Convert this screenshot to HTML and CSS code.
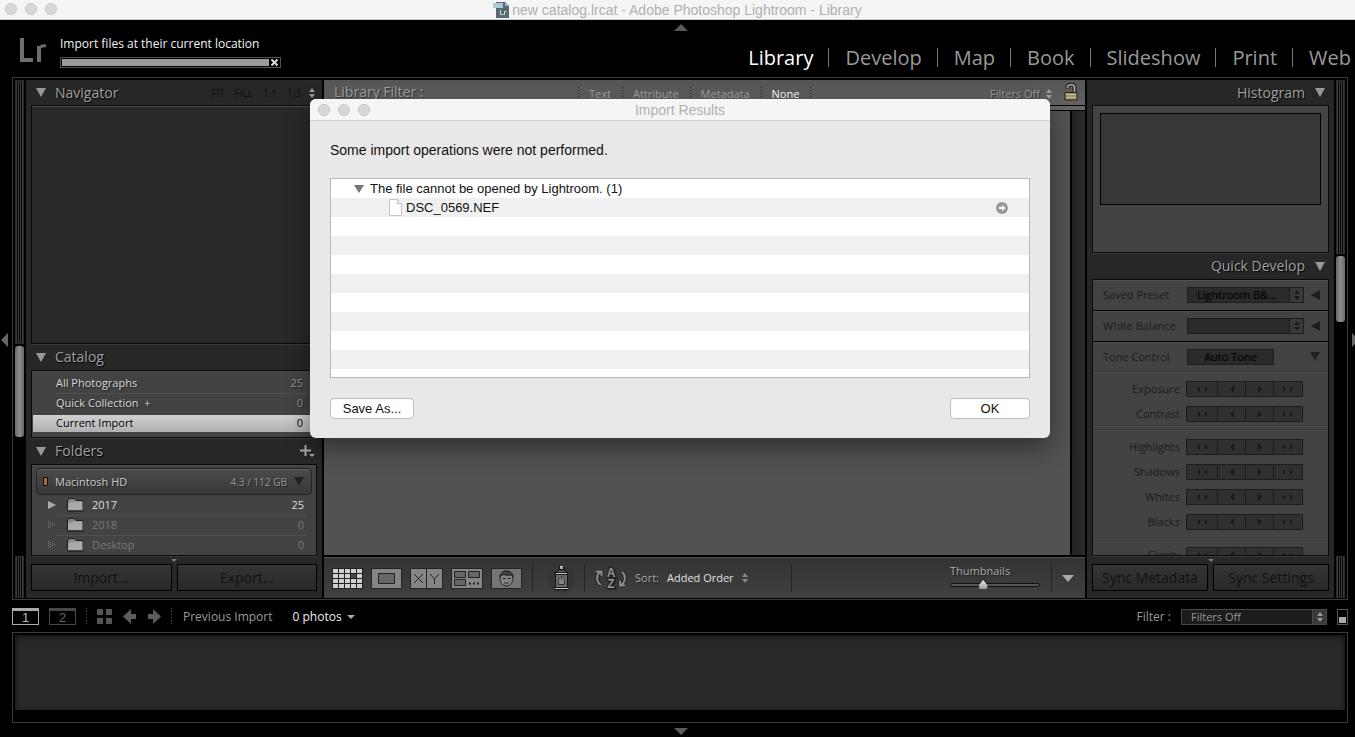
FILE: index.html
```html
<!DOCTYPE html>
<html lang="en">
<head>
<meta charset="utf-8">
<title>new catalog.lrcat - Adobe Photoshop Lightroom - Library</title>
<link rel="stylesheet" href="styles.css">
</head>
<body>
<svg class="defs" aria-hidden="true">
  <symbol id="ll" viewBox="0 0 12 8"><path d="M4 1v6L1 4zM11 1v6L8 4z"/></symbol>
  <symbol id="l" viewBox="0 0 12 8"><path d="M8 0v8L4 4z"/></symbol>
  <symbol id="r" viewBox="0 0 12 8"><path d="M4 0v8l4-4z"/></symbol>
  <symbol id="rr" viewBox="0 0 12 8"><path d="M1 1v6l3-3zM8 1v6l3-3z"/></symbol>
  <symbol id="updown" viewBox="0 0 6 10"><path d="M0 4l3-4 3 4zM0 6h6l-3 4z"/></symbol>
  <symbol id="folder" viewBox="0 0 17 14"><path d="M.5 12.500V3L2 .5h5l2 2h6.500v10z" fill="#8a8a8a" stroke="#1c1c1c"/><path d="M1 5l4-.5L7 3.500h8.500V12.500H1z" fill="#a9a9a9"/><path d="M1 13h15.500" stroke="#181818"/></symbol>
</svg>

<header class="titlebar">
  <span class="lights"><i></i><i></i><i></i></span>
  <svg width="16" height="17" viewBox="0 0 16 17"><path d="M3 1h9l4 4v12H3z" fill="#5b6870"/><path d="M12 1l4 4h-4z" fill="#8fb5c7"/><path d="M0 2h10v5H0z" fill="#a9cbdc"/><path d="M7.500 9v4.500h3M11.500 14v-3.500h2" fill="none" stroke="#b9dff0"/></svg>
  <span>new catalog.lrcat - Adobe Photoshop Lightroom - Library</span>
</header>

<div class="top">
  <svg class="logo" width="28" height="26" viewBox="0 0 28 26"><path d="M3 0v22h11M20 24V8" fill="none" stroke="#6e6e6e" stroke-width="4"/><path d="M20 13c0-4 3-6 7-5" fill="none" stroke="#6e6e6e" stroke-width="3"/></svg>
  <div class="activity">
    <span>Import files at their current location</span>
    <div class="progress"><div class="fill"></div><button aria-label="Cancel import"><svg width="7" height="7" viewBox="0 0 7 7"><path d="M.5.5l6 6M6.500.5l-6 6" stroke="#ddd" stroke-width="2"/></svg></button></div>
  </div>
  <nav class="modules"><a class="on" href="#">Library</a><a href="#">Develop</a><a href="#">Map</a><a href="#">Book</a><a href="#">Slideshow</a><a href="#">Print</a><a href="#">Web</a></nav>
  <i class="edge up"></i>
</div>

<main class="frame">
  <div class="strip"><i class="grip grow"></i><i class="thumb left-thumb"></i><i class="blank"></i><i class="grip foot-grip"></i></div>

  <aside class="panel left">
    <h2><i class="tri"></i>Navigator<span class="zooms"><b>FIT</b><b>FILL</b><b>1:1</b><b>1:3</b><svg width="6" height="10"><use href="#updown"/></svg></span></h2>
    <div class="box navigator"></div>
    <h2><i class="tri"></i>Catalog</h2>
    <ul class="box catalog">
      <li><span>All Photographs</span><em>25</em></li>
      <li><span>Quick Collection&nbsp; +</span><em>0</em></li>
      <li class="selected"><span>Current Import</span><em>0</em></li>
    </ul>
    <h2><i class="tri"></i>Folders<button class="add" aria-label="Add folder"><svg width="15" height="13" viewBox="0 0 15 13"><path d="M5.500 0v11M0 5.500h11" stroke="#aaa" stroke-width="2"/><path d="M9 9h6l-3 3z" fill="#aaa"/></svg></button></h2>
    <div class="box folders">
      <div class="volume"><i class="led"></i><span>Macintosh HD</span><small>4.3 / 112 GB</small><i class="tri dark"></i></div>
      <ul>
        <li class="live"><i class="right"></i><svg width="17" height="14"><use href="#folder"/></svg><span>2017</span><em>25</em></li>
        <li><svg class="dots" width="8" height="8" viewBox="0 0 8 8"><path d="M.5 0v8M2.500 1v6M4.500 2v4M6.500 3v2" stroke="#777" stroke-dasharray="1 1"/></svg><svg width="17" height="14"><use href="#folder"/></svg><span>2018</span><em>0</em></li>
        <li><svg class="dots" width="8" height="8" viewBox="0 0 8 8"><path d="M.5 0v8M2.500 1v6M4.500 2v4M6.500 3v2" stroke="#777" stroke-dasharray="1 1"/></svg><svg width="17" height="14"><use href="#folder"/></svg><span>Desktop</span><em>0</em></li>
      </ul>
    </div>
    <div class="more"><i></i></div>
    <div class="actions"><button>Import...</button><button>Export...</button></div>
  </aside>

  <section class="center">
    <div class="filterbar">
      <strong>Library Filter :</strong>
      <div class="tabs"><button>Text</button><button>Attribute</button><button>Metadata</button><button class="on">None</button><i></i></div>
      <span class="off">Filters Off<svg width="6" height="10"><use href="#updown"/></svg></span>
      <svg class="lock" width="14" height="18" viewBox="0 0 14 18"><path d="M3.500 6V4c0-3.500 7-3.500 7 0v5" fill="none" stroke="#222" stroke-width="4"/><path d="M3.500 5.500V4c0-3 7-3 7 0v5" fill="none" stroke="#b0b0b0" stroke-width="1.600"/><path d="M1 9.500h12v7.500H1z" fill="#9a9068" stroke="#252525"/><path d="M2 11.500h10M2 14.500h10" stroke="#c8bd95"/></svg>
    </div>
    <div class="canvas"><div class="photos"></div><div class="track"></div></div>
    <div class="toolbar">
      <div class="views">
        <button aria-label="Grid view"><svg width="31" height="21" viewBox="0 0 31 21"><path fill="#222" d="M0 0h31v21H0z"/><path d="M1 3h30M1 8h30M1 13h30M1 18h30" stroke="#d0d0d0" stroke-width="4" stroke-dasharray="5 1"/><path fill="#444" d="M19 6h5v4h-5z"/></svg></button>
        <button aria-label="Loupe view"><svg width="31" height="21" viewBox="0 0 31 21"><path d="M.5.5h30v20H.5z" fill="#858585" stroke="#222"/><path d="M7.500 5.500h16v10h-16z" fill="#666" stroke="#222"/></svg></button>
        <button aria-label="Compare view"><svg width="33" height="21" viewBox="0 0 33 21"><path d="M.5.5h32v20H.5zM16.500 0v21" fill="#858585" stroke="#222"/><path d="M4 6l9 9M13 6l-9 9M20 6l4.500 5L29 6M24.500 11v5" fill="none" stroke="#222"/></svg></button>
        <button aria-label="Survey view"><svg width="32" height="21" viewBox="0 0 32 21"><path d="M.5.5h31v20H.5z" fill="#858585" stroke="#222"/><path d="M3.500 3.500h11v6h-11zM17.500 3.500h11v6h-11zM3.500 11.500h11v6h-11z" fill="#666" stroke="#222"/><path d="M18 15.500h2M22 15.500h2M26 15.500h2" stroke="#222" stroke-width="2"/></svg></button>
        <button aria-label="People view"><svg width="31" height="21" viewBox="0 0 31 21"><path d="M.5.5h30v20H.5z" fill="#757575" stroke="#222"/><path d="M9 9c0-8 13-8 13 0 0 5-2 9-6.500 9S9 14 9 9z" fill="#858585" stroke="#222"/><path d="M9 9c0-8 13-8 13 0l-2-2c-4 1-7-1-9 0z" fill="#444" stroke="#222"/><path d="M11.500 10.500h3M16.500 10.500h3M13 14.500c2 1 3 1 5 0" fill="none" stroke="#222"/></svg></button>
      </div>
      <i class="sep"></i>
      <button class="spray" aria-label="Painter"><svg width="29" height="29" viewBox="0 0 29 29"><circle cx="14.500" cy="14.500" r="14" fill="#353535"/><path d="M12.500 2.500h4v3h-4z" fill="#aaa" stroke="#111"/><path d="M8.500 9.500L12 6h5l3.500 3.500v15h-12z" fill="#6a6a6a" stroke="#111"/><path d="M8 9.500h13M8 24.500h13" stroke="#111" stroke-width="3"/><path d="M9 9.500h11M8 24.500h13M13 2.500h3" stroke="#ccc"/><path d="M11.500 20.500V15l3-3 3 3v5.500z" fill="#858585" stroke="#333"/><path d="M14.500 14v2" stroke="#333"/></svg></button>
      <i class="sep"></i>
      <div class="sort">
        <svg class="az" width="32" height="24" viewBox="0 0 32 24"><path d="M6 19C1 16 1 9 5 6M1 5.500h5.500V10M26 19c5-3 5-10 1-13M25 15v4.500h5" fill="none" stroke="#222" stroke-width="4"/><path d="M6 19C1 16 1 9 5 6M1 5.500h5.500V10M26 19c5-3 5-10 1-13M25 15v4.500h5" fill="none" stroke="#8b8b8b" stroke-width="2"/><text x="16" y="11">A</text><text x="16" y="22">Z</text></svg>
        <label for="order">Sort:</label>
        <span class="pick"><select id="order"><option>Added Order</option></select><svg width="6" height="10"><use href="#updown"/></svg></span>
      </div>
      <i class="sep"></i>
      <div class="size"><label for="size">Thumbnails</label><input id="size" type="range" min="0" max="100" value="35"></div>
      <i class="sep"></i>
      <i class="menu"></i>
    </div>
  </section>

  <aside class="panel right-panel">
    <h2>Histogram<i class="tri"></i></h2>
    <div class="box histogram"><div></div></div>
    <h2>Quick Develop<i class="tri"></i></h2>
    <div class="box develop">
      <div class="row"><label for="preset">Saved Preset</label><span class="combo"><select id="preset"><option>Lightroom B&amp;...</option></select><i><svg width="6" height="10"><use href="#updown"/></svg></i></span><i class="back"></i></div>
      <div class="row"><label for="wb">White Balance</label><span class="combo"><select id="wb"><option></option></select><i><svg width="6" height="10"><use href="#updown"/></svg></i></span><i class="back"></i></div>
      <div class="row tone"><span>Tone Control</span><button class="auto">Auto Tone</button><i class="tri dark"></i></div>
      <div class="group">
        <div class="step"><span>Exposure</span><div><button aria-label="Much less"><svg><use href="#ll"/></svg></button><button aria-label="Less"><svg><use href="#l"/></svg></button><button aria-label="More"><svg><use href="#r"/></svg></button><button aria-label="Much more"><svg><use href="#rr"/></svg></button></div></div>
        <div class="step"><span>Contrast</span><div><button aria-label="Much less"><svg><use href="#ll"/></svg></button><button aria-label="Less"><svg><use href="#l"/></svg></button><button aria-label="More"><svg><use href="#r"/></svg></button><button aria-label="Much more"><svg><use href="#rr"/></svg></button></div></div>
      </div>
      <div class="group">
        <div class="step"><span>Highlights</span><div><button aria-label="Much less"><svg><use href="#ll"/></svg></button><button aria-label="Less"><svg><use href="#l"/></svg></button><button aria-label="More"><svg><use href="#r"/></svg></button><button aria-label="Much more"><svg><use href="#rr"/></svg></button></div></div>
        <div class="step"><span>Shadows</span><div><button aria-label="Much less"><svg><use href="#ll"/></svg></button><button aria-label="Less"><svg><use href="#l"/></svg></button><button aria-label="More"><svg><use href="#r"/></svg></button><button aria-label="Much more"><svg><use href="#rr"/></svg></button></div></div>
        <div class="step"><span>Whites</span><div><button aria-label="Much less"><svg><use href="#ll"/></svg></button><button aria-label="Less"><svg><use href="#l"/></svg></button><button aria-label="More"><svg><use href="#r"/></svg></button><button aria-label="Much more"><svg><use href="#rr"/></svg></button></div></div>
        <div class="step"><span>Blacks</span><div><button aria-label="Much less"><svg><use href="#ll"/></svg></button><button aria-label="Less"><svg><use href="#l"/></svg></button><button aria-label="More"><svg><use href="#r"/></svg></button><button aria-label="Much more"><svg><use href="#rr"/></svg></button></div></div>
      </div>
      <div class="group">
        <div class="step"><span>Clarity</span><div><button aria-label="Much less"><svg><use href="#ll"/></svg></button><button aria-label="Less"><svg><use href="#l"/></svg></button><button aria-label="More"><svg><use href="#r"/></svg></button><button aria-label="Much more"><svg><use href="#rr"/></svg></button></div></div>
      </div>
    </div>
    <div class="more"><i></i></div>
    <div class="actions"><button>Sync Metadata</button><button>Sync Settings</button></div>
  </aside>

  <div class="strip"><i class="grip right-grip"></i><i class="thumb right-thumb"></i><i class="blank"></i><i class="grip foot-grip"></i></div>
  <i class="edge west"></i><i class="edge east"></i>
</main>

<div class="filmbar">
  <button class="screen on">1</button><button class="screen">2</button>
  <i class="dotline"></i>
  <svg width="15" height="15" viewBox="0 0 15 15"><path d="M0 0h6v6H0zM9 0h6v6H9zM0 9h6v6H0zM9 9h6v6H9z" fill="#555"/></svg>
  <button aria-label="Back"><svg width="13" height="15" viewBox="0 0 13 15"><path d="M8 0v5h5v5H8v5L0 7.500z" fill="#5c5c5c"/></svg></button>
  <button aria-label="Forward"><svg width="13" height="15" viewBox="0 0 13 15"><path d="M5 0v5H0v5h5v5l8-7.500z" fill="#5c5c5c"/></svg></button>
  <i class="dotline"></i>
  <span class="source">Previous Import</span><span class="count">0 photos</span><i class="menu small"></i>
  <label class="filter-label" for="filter">Filter :</label>
  <span class="combo wide"><select id="filter"><option>Filters Off</option></select><i><svg width="6" height="10"><use href="#updown"/></svg></i></span>
  <button class="switch" aria-label="Toggle filters"><i></i></button>
</div>
<div class="film"><div></div></div>
<footer><i class="edge down"></i></footer>

<div class="dialog" role="dialog" aria-labelledby="dialog-title">
  <div class="dialog-bar"><span class="lights"><i></i><i></i><i></i></span><span id="dialog-title">Import Results</span></div>
  <p>Some import operations were not performed.</p>
  <ul class="results">
    <li class="reason"><i></i>The file cannot be opened by Lightroom. (1)</li>
    <li class="file"><svg width="13" height="17" viewBox="0 0 13 17"><path d="M.5.5h8l4 4v12H.5z" fill="#fff" stroke="#c4c4c4"/><path d="M8.500.5v4h4" fill="#eee" stroke="#c4c4c4"/></svg><span>DSC_0569.NEF</span><button aria-label="Show file"><svg width="12" height="12" viewBox="0 0 12 12"><circle cx="6" cy="6" r="6" fill="#999"/><path d="M3 5h3V3l3.500 3L6 9V7H3z" fill="#fff"/></svg></button></li>
  </ul>
  <div class="dialog-actions"><button>Save As...</button><button class="ok">OK</button></div>
</div>
</body>
</html>
```

FILE: styles.css
```css
* { box-sizing: border-box; }
body {
  margin: 0;
  height: 100vh;
  display: flex;
  flex-direction: column;
  position: relative;
  overflow: hidden;
  background: #000;
  color: #999;
  font: 11px/20px "Open Sans", "Noto Sans", sans-serif;
}
button, select, input { font: inherit; color: inherit; margin: 0; padding: 0; border: 0; background: none; }
select { appearance: none; outline: 0; }
ul { list-style: none; margin: 0; padding: 0; }
em { font-style: normal; }
svg { display: block; flex: none; fill: currentColor; }
.defs { display: none; }

.titlebar, .dialog-bar {
  display: flex;
  align-items: center;
  justify-content: center;
  position: relative;
  background: #f5f5f5;
  color: #b0b0b0;
  font-family: "Liberation Sans", Arial, sans-serif;
  font-size: 14px;
}
.titlebar { flex: none; height: 20px; gap: 3px; border-bottom: 1px solid #c9cdc9; }
.lights { position: absolute; left: 5px; top: 3px; display: flex; gap: 8px; }
.lights i { width: 12px; height: 12px; border-radius: 50%; background: #d8d8d8; border: 1px solid #c6c6c6; }

.top { flex: none; height: 57px; display: flex; position: relative; padding: 0 4px 0 19px; }
.logo { margin-top: 18px; }
.activity { margin: 14px 0 0 13px; color: #f2f2f2; width: 221px; white-space: nowrap; font-size: 12px; }
.activity span { display: block; }
.progress { display: flex; height: 11px; margin-top: 3px; border: 1px solid #555; padding: 1px; }
.fill { flex: 1; background: #9b9b9b; }
.progress button { width: 10px; display: grid; place-items: center; }
.modules { margin-left: auto; display: flex; align-items: center; padding-top: 18px; font-size: 20px; }
.modules a { color: #999; text-decoration: none; padding: 0 15px 0 16px; border-left: 1px solid #777; line-height: 19px; }
.modules a:first-child { border: 0; color: #fff; }
.modules a:last-child { padding-right: 0; }

.edge { position: absolute; border: 7px solid transparent; }
.up { left: 50%; top: 4px; margin-left: -4px; border-top: 0; border-bottom-color: #5a5a5a; }
.down { left: 50%; top: 5px; margin-left: -4px; border-bottom: 0; border-top-color: #5a5a5a; }
.west { left: -12px; top: 255px; border-left: 0; border-right-color: #666; }
.east { right: -12px; top: 255px; border-right: 0; border-left-color: #666; }

.frame { flex: 1; display: flex; position: relative; margin: 0 7px 0 12px; border: 1px solid #3b3b3b; padding: 2px 0 1px; min-height: 0; }
.strip { width: 13px; padding: 0 2px; display: flex; flex-direction: column; }
.strip i { display: block; }
.grip { background: repeating-linear-gradient(90deg, #3a3a3a 0 1px, #080808 1px 2px); border: 1px solid #2c2c2c; }
.grow { height: 264px; }
.right-grip { height: 174px; }
.foot-grip { height: 42px; }
.thumb { border-radius: 3px; background: linear-gradient(90deg, #666, #8c8c8c 50%, #666); margin: 2px 0; }
.left-thumb { height: 91px; }
.right-thumb { height: 66px; }
.blank { flex: 1; }

.panel { background: #272727; padding: 0 5px 7px; display: flex; flex-direction: column; min-height: 0; }
.left { width: 296px; }
.right-panel { width: 247px; }
.center { flex: 1; min-width: 0; display: flex; flex-direction: column; margin: 0 2px; }
h2 { margin: 0; height: 26px; display: flex; align-items: center; font-size: 14px; font-weight: 400; color: #a0a0a0; padding-left: 5px; text-shadow: 1px 1px 1px #000; flex: none; }
.panel h2:first-child { height: 25px; }
.right-panel h2 { justify-content: flex-end; padding-right: 4px; gap: 10px; }
.tri { border: 5px solid transparent; border-top: 9px solid #999; border-bottom: 0; }
.left h2 .tri { margin-right: 9px; }
.tri.dark { border-top-color: #222; }
.zooms { margin-left: auto; display: flex; align-items: center; gap: 10px; font-size: 10px; color: #101010; padding-right: 2px; text-shadow: none; }
.zooms b { font-weight: 400; }
.zooms svg { fill: #999; margin-left: -2px; }
.add { margin-left: auto; padding-right: 2px; }
.box { border: 1px solid #0a0a0a; box-shadow: 0 1px #3a3a3a, inset 0 1px #4a4a4a; background: #434343; flex: none; color: #ccc; }
.navigator { height: 239px; background: #282828; }
.catalog { padding: 2px 1px 4px; height: 68px; }
.catalog li { height: 20px; display: flex; justify-content: space-between; padding: 0 12px 0 23px; text-shadow: 1px 1px 1px #222; color: #d8d8d8; }
.catalog li + li { background: linear-gradient(#505050, #505050) 22px 0 / 251px 1px no-repeat; }
.catalog em, .folders em { color: #999; }
.catalog li.selected { background: linear-gradient(#d0d0d0, #b0b0b0) 0 2px / 100% 17px no-repeat; color: #000; text-shadow: 1px 1px #ccc; }
.catalog .selected em { color: #000; }
.left .box.folders { flex: 1; min-height: 0; padding: 3px 4px 0; overflow: hidden; }
.volume { display: flex; align-items: center; height: 27px; border: 1px solid #222; border-radius: 4px; background: linear-gradient(#4b4b4b, #383838); padding: 0 7px 0 6px; box-shadow: inset 0 1px #5c5c5c; text-shadow: 1px 1px #222; }
.led { width: 5px; height: 9px; background: #a66d33; border: 1px solid #111; margin-right: 7px; }
.volume small { margin: 0 7px 0 auto; font-size: 10px; color: #999; }
.folders li { display: flex; align-items: center; height: 20px; padding: 0 8px 0 12px; color: #777; }
.folders li + li { background: linear-gradient(#505050, #505050) 19px 0 / 251px 1px no-repeat; }
.folders li span { margin-left: 8px; }
.folders li em { margin-left: auto; color: #777; }
.folders li.live, .folders .live em { color: #ddd; }
.right { border: 4px solid transparent; border-left: 8px solid #aaa; border-right: 0; margin-right: 11px; }
.dots { margin-right: 11px; }
.more { height: 8px; display: flex; justify-content: center; align-items: center; flex: none; }
.more i { border: 3px solid transparent; border-top-color: #777; border-bottom: 0; }
.actions { display: flex; gap: 5px; flex: none; }
.actions button { flex: 1; height: 27px; border: 1px solid #000; background: linear-gradient(#353535, #292929); color: #111; font-size: 14px; white-space: nowrap; }

.filterbar { flex: none; height: 31px; display: flex; background: linear-gradient(#555, #626262 25px, #000 25px, #000 26px, #666 26px, #666 30px, #000 30px); padding: 2px 7px 0 10px; text-shadow: 1px 1px 1px #333; color: #a0a0a0; }
.filterbar strong { font-size: 14px; font-weight: 400; width: 244px; }
.tabs { display: flex; height: 22px; padding-top: 1px; }
.tabs button, .tabs i { padding: 0 11px; background: repeating-linear-gradient(#222 0 1px, transparent 1px 3px) 0 4px / 1px 11px no-repeat; }
.tabs .on { color: #fff; }
.off { margin-left: auto; margin-right: 12px; padding-top: 2px; display: flex; gap: 6px; height: 22px; align-items: center; }
.lock { margin-top: 1px; }
.canvas { flex: 1; display: flex; min-height: 0; }
.photos { flex: 1; background: #525252; border-right: 2px solid #000; }
.track { width: 13px; background: linear-gradient(90deg, #222, #2c2c2c); }
.toolbar { flex: none; display: flex; align-items: center; height: 43px; border-top: 2px solid #000; background: linear-gradient(#333, #404040); box-shadow: inset 0 1px #4f4f4f; padding: 1px 11px 0 8px; text-shadow: 1px 1px 1px #222; color: #aaa; }
.views { display: flex; gap: 8px; }
.sep { width: 1px; height: 28px; background: #252525; margin: 0 10px; flex: none; }
.spray { margin: 0 4px; }
.spray + .sep { margin-left: 4px; }
.sort { display: flex; align-items: center; gap: 8px; }
.az text { font: bold 12px "Liberation Sans", Arial, sans-serif; text-anchor: middle; fill: #939393; stroke: #222; stroke-width: 2px; paint-order: stroke; }
.pick { display: flex; align-items: center; gap: 8px; color: #e0e0e0; }
.pick svg { fill: #888; }
.sort + .sep { margin-left: 43px; }
.size { margin-left: auto; width: 90px; display: flex; flex-direction: column; }
.size + .sep { margin-left: 11px; }
.size label { line-height: 14px; }
input[type=range] { appearance: none; width: 100%; height: 14px; }
input[type=range]::-webkit-slider-runnable-track { height: 4px; border: 1px solid #111; border-radius: 2px; background: #555; }
input[type=range]::-webkit-slider-thumb { appearance: none; width: 9px; height: 9px; margin-top: -4px; background: linear-gradient(#eee, #999); clip-path: polygon(50% 0, 100% 60%, 90% 100%, 10% 100%, 0 60%); }
.menu { border: 6px solid transparent; border-top: 7px solid #aaa; border-bottom: 0; }
.menu.small { border-width: 4px 4px 0; }

.histogram { height: 148px; padding: 7px; }
.histogram div { height: 92px; border: 1px solid #000; background: #373737; }
.box.develop { flex: 1; min-height: 0; overflow: hidden; color: #1c1c1c; }
.row { height: 31px; display: grid; grid-template-columns: 84px 117px 1fr; align-items: center; padding: 0 8px 0 10px; border-bottom: 1px solid #000; box-shadow: inset 0 1px #505050; white-space: nowrap; }
.row.tone { height: 30px; border-bottom: 1px solid #393939; }
.row > :last-child { justify-self: end; }
.back { border: 5px solid transparent; border-right: 9px solid #1c1c1c; border-left: 0; }
.combo { display: flex; height: 16px; border: 1px solid #1c1c1c; background: #2b2b2b; }
.combo select { flex: 1; min-width: 0; padding-left: 9px; line-height: 14px; }
.row select, .auto { color: #080808; opacity: 1; text-shadow: 0 0 1px #111; }
.combo i { width: 14px; border-left: 1px solid #1c1c1c; background: #393939; display: grid; place-items: center; }
.auto { width: 87px; height: 16px; border: 1px solid #1c1c1c; background: #2b2b2b; line-height: 14px; }
.group { padding: 4px 25px 3px 0; border-bottom: 1px solid #393939; box-shadow: inset 0 1px #4c4c4c; }
.step { height: 25px; display: flex; align-items: center; justify-content: flex-end; gap: 6px; }
.step div { display: grid; grid-template-columns: 30px 28px 28px 29px; height: 16px; border: 1px solid #1c1c1c; background: #303030; width: 117px; }
.step button { border-left: 1px solid #1c1c1c; display: grid; place-items: center; }
.step button:first-child { border: 0; }
.step svg { width: 12px; height: 8px; fill: #1a1a1a; }

.filmbar { flex: none; display: flex; align-items: center; height: 32px; padding: 1px 7px 0 12px; }
.screen { width: 27px; height: 17px; border: 1px solid #484848; border-top-width: 3px; line-height: 13px; color: #666; margin-right: 10px; font-family: "Liberation Sans", Arial, sans-serif; font-size: 13px; }
.screen.on { border-color: #aaa; color: #bbb; }
.dotline { width: 1px; height: 18px; background: repeating-linear-gradient(#555 0 1px, transparent 1px 3px); margin: 0 10px; }
.filmbar svg + button { margin-left: 11px; }
.filmbar button + button:not(.screen) { margin-left: 12px; }
.filmbar .screen + .dotline { margin-left: 0; }
.filmbar button + .dotline + .source { margin-left: 1px; }
.source { font-size: 12px; }
.count { font-size: 12px; color: #eee; margin: 0 5px 0 20px; }
.filter-label { margin-left: auto; margin-right: 10px; font-size: 12px; }
.combo.wide { width: 146px; border-color: #484848; background: #1c1c1c; }
.combo.wide i { border-color: #484848; }
.switch { width: 11px; height: 16px; border: 1px solid #555; margin-left: 10px; padding: 7px 1px 1px; }
.switch i { display: block; height: 6px; background: #aaa; }
.film { flex: none; height: 91px; margin: 0 7px 0 12px; border: 1px solid #3b3b3b; padding: 2px 2px 12px; }
.film div { height: 100%; background: #282828; box-shadow: inset 0 2px 5px #111; }
footer { flex: none; height: 14px; position: relative; }

.dialog { position: absolute; left: 310px; top: 99px; width: 740px; border-radius: 6px; overflow: hidden; background: #e8e8e8; color: #111; font-family: "Liberation Sans", Arial, sans-serif; font-size: 13px; box-shadow: 0 10px 24px rgba(0,0,0,.4); }
.dialog-bar { height: 22px; border-bottom: 1px solid #cfcfcf; }
.dialog .lights { left: 8px; top: 5px; }
.dialog p { margin: 19px 20px 18px; font-size: 14px; }
.results { height: 200px; margin: 0 20px; border: 1px solid #b9b9b9; background: repeating-linear-gradient(#fff 0 19px, #f0f0f0 19px 38px); }
.results li { height: 19px; display: flex; align-items: center; line-height: 18px; }
.reason { padding-left: 23px; }
.reason i { border: 5px solid transparent; border-top: 8px solid #777; border-bottom: 0; margin-right: 6px; }
.file { padding: 0 21px 0 58px; gap: 4px; }
.file button { margin-left: auto; }
.dialog-actions { display: flex; justify-content: space-between; padding: 20px 20px 19px; }
.dialog-actions button { width: 84px; height: 21px; border: 1px solid #bdbdbd; border-radius: 4px; background: #fff; }
.dialog-actions .ok { width: 80px; }
```
